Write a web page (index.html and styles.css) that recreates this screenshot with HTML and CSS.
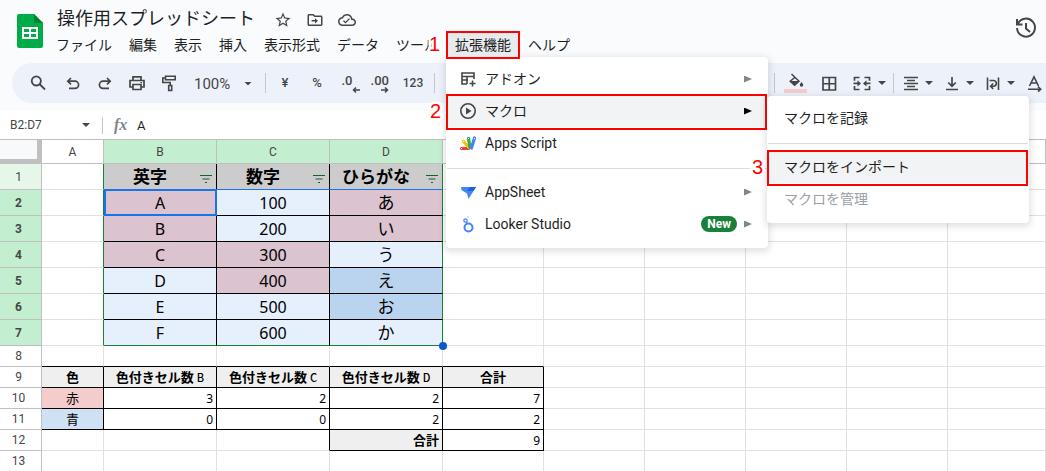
FILE: index.html
```html
<!DOCTYPE html>
<html lang="ja">
<head>
<meta charset="utf-8">
<title>操作用スプレッドシート</title>
<link rel="stylesheet" href="styles.css">
</head>
<body>
<header class="top">
  <svg class="logo" viewBox="0 0 26 34" aria-hidden="true"><path fill="#00ac47" d="M2 0h15l9 9v23a2 2 0 0 1-2 2H2a2 2 0 0 1-2-2V2a2 2 0 0 1 2-2z"/><path fill="#00832d" d="M17 0l9 9h-9z"/><path fill="#fff" fill-rule="evenodd" d="M5 13h16v12H5zM7 15v3h5v-3zM14 15v3h5v-3zM7 20v3h5v-3zM14 20v3h5v-3z"/></svg>
  <div class="heading">
    <div class="title-row">
      <h1 class="title">操作用スプレッドシート</h1>
      <button class="title-btn" aria-label="スター"><svg viewBox="0 0 24 24"><path d="M22 9.24l-7.19-.62L12 2 9.19 8.63 2 9.24l5.46 4.73L5.82 21 12 17.27 18.18 21l-1.63-7.03L22 9.24zM12 15.4l-3.76 2.27 1-4.28-3.32-2.88 4.38-.38L12 6.1l1.71 4.04 4.38.38-3.32 2.88 1 4.28L12 15.4z"/></svg></button>
      <button class="title-btn" aria-label="移動"><svg viewBox="0 0 24 24"><path d="M20 6h-8l-2-2H4c-1.1 0-2 .9-2 2v12c0 1.100.9 2 2 2h16c1.100 0 2-.9 2-2V8c0-1.100-.9-2-2-2zm0 12H4V6h5.170l2 2H20v10zm-8-6H7.500v2H12v2.500l4-3.500-4-3.500z"/></svg></button>
      <button class="title-btn" aria-label="保存状態"><svg viewBox="0 0 24 24"><path d="M19.350 10.040C18.670 6.590 15.640 4 12 4 9.110 4 6.600 5.640 5.350 8.040 2.340 8.360 0 10.910 0 14c0 3.310 2.690 6 6 6h13c2.760 0 5-2.240 5-5 0-2.640-2.050-4.780-4.650-4.960zM19 18H6c-2.210 0-4-1.790-4-4s1.790-4 4-4h.71C7.370 7.690 9.480 6 12 6c3.040 0 5.500 2.460 5.500 5.500v.5H19c1.660 0 3 1.340 3 3s-1.340 3-3 3zM10 14.200l-2-2-1.300 1.300L10 16.800l6-6-1.300-1.300z"/></svg></button>
    </div>
    <nav class="menubar">
      <button class="menu-btn">ファイル</button>
      <button class="menu-btn">編集</button>
      <button class="menu-btn">表示</button>
      <button class="menu-btn">挿入</button>
      <button class="menu-btn">表示形式</button>
      <button class="menu-btn">データ</button>
      <button class="menu-btn">ツール</button>
      <div class="menu-slot">
        <button class="menu-btn open">拡張機能</button>
        <span class="step step-1">1</span>
        <div class="menu main-menu">
          <button class="item"><svg class="item-icon" viewBox="0 0 18 18"><path fill="none" stroke="#444746" stroke-width="1.600" d="M8 14H3V3h12v6M3 6.500h12M3 10h6M8 6.500V14M13.500 10.500v6M10.500 13.500h6"/></svg><span class="item-text">アドオン</span><i class="arrow"></i></button>
          <div class="item-wrap marked">
            <button class="item active"><svg class="item-icon" viewBox="0 0 18 18"><circle cx="9" cy="9" r="7.200" fill="none" stroke="#444746" stroke-width="1.600"/><path fill="#444746" d="M7 5.500L12.500 9 7 12.500z"/></svg><span class="item-text">マクロ</span><i class="arrow"></i></button>
            <span class="step step-2">2</span>
            <div class="menu sub-menu">
              <button class="item"><span class="item-text">マクロを記録</span></button>
              <hr class="sep">
              <div class="item-wrap marked">
                <button class="item active"><span class="item-text">マクロをインポート</span></button>
                <span class="step step-3">3</span>
              </div>
              <button class="item off" disabled><span class="item-text">マクロを管理</span></button>
            </div>
          </div>
          <button class="item"><svg class="item-icon" viewBox="0 0 18 18"><g fill="none" stroke-linecap="round" stroke-width="3.200"><path stroke="#ea4335" d="M2.500 14.500h7"/><path stroke="#fbbc04" d="M4.500 7.500l5.500 6"/><path stroke="#34a853" d="M9.500 4.500l1.500 9"/><path stroke="#4285f4" d="M15.500 4l-3 10"/></g><path fill="#fff" d="M2 14h1v1H2zM4 7h1v1H4zM9 4h1v1H9zM15 4h1v1h-1z"/></svg><span class="item-text">Apps Script</span></button>
          <hr class="sep">
          <button class="item"><svg class="item-icon" viewBox="0 0 18 18"><path fill="#4285f4" d="M2 4h15L9.500 16 8 10.500 2.500 7z"/><path fill="#1a66d9" d="M11 4h6l-2.500 4H8z"/></svg><span class="item-text">AppSheet</span><i class="arrow"></i></button>
          <button class="item"><svg class="item-icon" viewBox="0 0 18 18"><g fill="none" stroke="#4285f4"><circle cx="9.500" cy="12.500" r="4" stroke-width="2"/><circle cx="6.500" cy="5.500" r="1.700" stroke-width="1.200"/></g><circle cx="9" cy="2" r="1.300" fill="#d2e3fc"/><path stroke="#4285f4" stroke-width="1.200" d="M7.500 7l1 2"/></svg><span class="item-text">Looker Studio</span><span class="badge">New</span><i class="arrow"></i></button>
        </div>
      </div>
      <button class="menu-btn">ヘルプ</button>
    </nav>
  </div>
  <button class="history" aria-label="変更履歴"><svg viewBox="0 0 24 24"><path fill="none" stroke="#444746" stroke-width="2" d="M4 7.500A9 9 0 1 1 3 12M3 3v5.500h5.500M12 7v5.500l4 3.500"/></svg></button>
</header>

<div class="toolbar">
  <button class="tool search" aria-label="検索"><svg viewBox="0 0 20 20"><path fill="none" stroke="#444746" stroke-width="1.800" d="M12 11.500l5 5M8.300 3.300a4.600 4.600 0 1 0 .01 0z"/></svg></button>
  <button class="tool" aria-label="元に戻す"><svg viewBox="0 0 20 20"><path fill="none" stroke="#444746" stroke-width="1.700" d="M8 5L4.800 8.200 8 11.400M5 8.200h7a3.600 3.600 0 0 1 0 7.200H6"/></svg></button>
  <button class="tool" aria-label="やり直し"><svg viewBox="0 0 20 20"><path fill="none" stroke="#444746" stroke-width="1.700" d="M12 5l3.200 3.200L12 11.400M15 8.200H8a3.600 3.600 0 0 0 0 7.200h6"/></svg></button>
  <button class="tool" aria-label="印刷"><svg viewBox="0 0 20 20"><path fill="none" stroke="#444746" stroke-width="1.700" d="M6 7V3.800h8V7M6 14H3V7.500h14V14h-3M6 11.500h8v5H6z"/><path fill="#444746" d="M13.500 9h1.500v1.300h-1.500z"/></svg></button>
  <button class="tool" aria-label="書式を貼り付け"><svg viewBox="0 0 20 20"><path fill="none" stroke="#444746" stroke-width="1.600" d="M6.500 3.300h9.700v3.400H6.500zM6.500 5H3.800v4.500h7.400V12M9.700 12.500h3v5h-3z"/></svg></button>
  <button class="tool zoom">100%<i class="caret"></i></button>
  <span class="divider"></span>
  <button class="tool glyph">¥</button>
  <button class="tool glyph">%</button>
  <button class="tool decimal less">.0<svg viewBox="0 0 8 6"><path fill="none" stroke="#444746" stroke-width="1.500" d="M8 3H1.500M4 .5L1.500 3 4 5.500"/></svg></button>
  <button class="tool decimal">.00<svg viewBox="0 0 8 6"><path fill="none" stroke="#444746" stroke-width="1.500" d="M0 3h6.500M4 .5L6.500 3 4 5.500"/></svg></button>
  <button class="tool number">123</button>
  <span class="divider"></span>
  <div class="tool-group">
    <span class="divider"></span>
    <button class="tool fill" aria-label="塗りつぶしの色"><svg viewBox="0 0 20 16"><path fill="none" stroke="#444746" stroke-width="1.500" d="M5.500 1l7.500 7.300-4.400 4L4.200 8.200 9.300 4"/><path fill="#444746" d="M4 8h9l-4.400 4.700zM15.500 9c1.200 1.600 1.700 2.300 1.700 3a1.700 1.700 0 0 1-3.400 0c0-.7.500-1.400 1.700-3z"/></svg><i class="swatch"></i></button>
    <button class="tool borders" aria-label="枠線"><svg viewBox="0 0 20 20"><path fill="none" stroke="#444746" stroke-width="1.700" d="M4 4.500h12.500V17H4zM10.250 4.500V17M4 10.750h12.500"/></svg></button>
    <button class="drop merge" aria-label="セルを結合"><svg viewBox="0 0 24 20"><path fill="none" stroke="#444746" stroke-width="1.700" d="M9.500 4.500h-5v3.300M4.500 13v3.500h5M14.500 4.500h5v3.300M19.500 13v3.500h-5M3.500 10.400h6M14.500 10.400h6"/><path fill="#444746" d="M7.500 7.200l3.500 3.200-3.500 3.200zM16.500 7.200L13 10.400l3.500 3.200z"/></svg><i class="caret"></i></button>
    <span class="divider"></span>
    <div class="drops">
      <button class="drop" aria-label="水平方向の配置"><svg viewBox="0 0 20 20"><path fill="none" stroke="#444746" stroke-width="1.600" d="M3 4.500h14M6 7.500h8M3 10.500h14M6 13.500h8M3 16.500h14"/></svg><i class="caret"></i></button>
      <button class="drop" aria-label="垂直方向の配置"><svg viewBox="0 0 20 20"><path fill="none" stroke="#444746" stroke-width="1.700" d="M10 4v9M6.200 9.500l3.800 3.700 3.800-3.700M4 16.500h12"/></svg><i class="caret"></i></button>
      <button class="drop" aria-label="折り返し"><svg viewBox="0 0 20 20"><path fill="none" stroke="#444746" stroke-width="1.600" d="M4.500 4.500V17M15.500 4.500V17M6.500 7.500h4a2.600 2.600 0 0 1 0 5.700H8.200M10.200 10.500l-2.600 2.700 2.600 2.700"/></svg><i class="caret"></i></button>
      <button class="drop" aria-label="テキストの回転"><svg viewBox="0 0 20 20"><path fill="none" stroke="#444746" stroke-width="1.600" d="M5.500 13L10 3.800 14.500 13M7 10h6M4 16.200h12.500M14 13.700l2.700 2.500-2.700 2.500"/></svg></button>
    </div>
  </div>
</div>

<div class="formula">
  <button class="name-box">B2:D7<i class="caret"></i></button>
  <span class="divider"></span>
  <span class="fx"><i>fx</i></span>
  <input class="formula-input" aria-label="数式バー" value="A">
</div>

<table class="grid">
  <colgroup><col class="c-row"><col class="c-a"><col class="c-b"><col class="c-b"><col class="c-b"><col class="c-e"><col class="c-e"><col class="c-e"><col class="c-e"><col class="c-e"><col></colgroup>
  <thead>
    <tr><th class="corner"></th><th>A</th><th class="sel">B</th><th class="sel">C</th><th class="sel">D</th><th>E</th><th>F</th><th>G</th><th>H</th><th>I</th><th>J</th></tr>
  </thead>
  <tbody class="tall">
    <tr><th class="near">1</th><td class="g-r"></td><td class="head blue-b">英字<svg class="filter" viewBox="0 0 12 8"><path d="M0 .5h12M2.500 4h7M5 7.500h2"/></svg></td><td class="head blue-b">数字<svg class="filter" viewBox="0 0 12 8"><path d="M0 .5h12M2.500 4h7M5 7.500h2"/></svg></td><td class="head blue-b g-r">ひらがな<svg class="filter" viewBox="0 0 12 8"><path d="M0 .5h12M2.500 4h7M5 7.500h2"/></svg></td><td></td><td></td><td></td><td></td><td></td><td></td></tr>
    <tr><th>2</th><td class="g-r"></td><td class="box red current">A</td><td class="box pale">100</td><td class="box red kana g-r">あ</td><td></td><td></td><td></td><td></td><td></td><td></td></tr>
    <tr><th>3</th><td class="g-r"></td><td class="box red">B</td><td class="box pale">200</td><td class="box red kana g-r">い</td><td></td><td></td><td></td><td></td><td></td><td></td></tr>
    <tr><th>4</th><td class="g-r"></td><td class="box red">C</td><td class="box red">300</td><td class="box pale kana g-r">う</td><td></td><td></td><td></td><td></td><td></td><td></td></tr>
    <tr><th>5</th><td class="g-r"></td><td class="box pale">D</td><td class="box red">400</td><td class="box blue kana g-r">え</td><td></td><td></td><td></td><td></td><td></td><td></td></tr>
    <tr><th>6</th><td class="g-r"></td><td class="box pale">E</td><td class="box pale">500</td><td class="box blue kana g-r">お</td><td></td><td></td><td></td><td></td><td></td><td></td></tr>
    <tr><th>7</th><td class="g-r"></td><td class="box pale g-b">F</td><td class="box pale g-b">600</td><td class="box pale kana g-b g-r handle">か</td><td></td><td></td><td></td><td></td><td></td><td></td></tr>
  </tbody>
  <tbody class="short">
    <tr><th>8</th><td class="k-b"></td><td class="k-b"></td><td class="k-b"></td><td class="k-b"></td><td class="k-b"></td><td></td><td></td><td></td><td></td><td></td></tr>
    <tr><th>9</th><td class="box label">色</td><td class="box label">色付きセル数 <small>B</small></td><td class="box label">色付きセル数 <small>C</small></td><td class="box label">色付きセル数 <small>D</small></td><td class="box label">合計</td><td></td><td></td><td></td><td></td><td></td></tr>
    <tr><th>10</th><td class="box name rose">赤</td><td class="box num">3</td><td class="box num">2</td><td class="box num">2</td><td class="box num">7</td><td></td><td></td><td></td><td></td><td></td></tr>
    <tr><th>11</th><td class="box name sky">青</td><td class="box num">0</td><td class="box num">0</td><td class="box num">2</td><td class="box num">2</td><td></td><td></td><td></td><td></td><td></td></tr>
    <tr><th>12</th><td></td><td></td><td class="k-r"></td><td class="box label total">合計</td><td class="box num">9</td><td></td><td></td><td></td><td></td><td></td></tr>
    <tr><th>13</th><td></td><td></td><td></td><td></td><td></td><td></td><td></td><td></td><td></td><td></td></tr>
  </tbody>
</table>
</body>
</html>
```
FILE: styles.css
```css
* { box-sizing: border-box; }
body {
  margin: 0;
  min-height: 100vh;
  overflow: hidden;
  background: #f9fbfd;
  color: #1f1f1f;
  font: 14px/20px Roboto, "Noto Sans CJK JP", sans-serif;
}
button {
  margin: 0;
  padding: 0;
  border: 0;
  background: none;
  color: inherit;
  font: inherit;
  white-space: nowrap;
}
svg { display: block; flex: none; }

/* Title and menu bar */
.top { display: flex; height: 63px; padding: 6px 8px 0 17px; }
.logo { width: 26px; height: 34px; margin-top: 8px; }
.heading { flex: 1; padding-left: 5px; }
.title-row { display: flex; align-items: center; height: 26px; padding-left: 9px; }
.title { margin: 0 12px 4px 0; font-size: 18px; line-height: 22px; font-weight: 400; font-family: "Noto Sans CJK JP", sans-serif; }
.title-btn { width: 32px; height: 24px; display: grid; place-items: center; margin-top: 2px; }
.title-btn svg { width: 18px; height: 18px; fill: #444746; }
.menubar { display: flex; gap: 1px; height: 26px; }
.menu-btn { height: 26px; padding: 0 8px; line-height: 26px; }
.menu-slot { position: relative; z-index: 5; }
.menu-btn.open { position: relative; z-index: 1; background: #e8ebee; outline: 2px solid #f00; outline-offset: -1px; }
.history { align-self: flex-start; width: 24px; height: 24px; margin-top: 10px; }
.history svg { width: 24px; height: 24px; }

/* Menus */
.menu {
  position: absolute;
  padding: 6px 0 8px;
  border-radius: 4px;
  background: #fff;
  box-shadow: 0 2px 6px 2px rgba(60, 64, 67, .15);
}
.main-menu { left: -1px; top: 25px; width: 322px; }
.sub-menu { left: 321px; top: 1px; width: 262px; z-index: 2; }
.item {
  display: flex;
  align-items: center;
  width: 100%;
  height: 32px;
  padding: 0 16px 0 13px;
  text-align: left;
  line-height: 20px;
}
.sub-menu .item { padding-left: 17px; }
.item-icon { width: 18px; height: 18px; margin-right: 8px; }
.item-text { flex: 1; }
.item.off { color: #9aa0a6; }
.item-wrap { position: relative; }
.marked .item.active { background: #f1f3f4; }
.marked > .item.active::after {
  content: "";
  position: absolute;
  inset: -1px 1px -3px 0;
  border: 2px solid #f00;
}
.arrow { width: 8px; height: 7px; background: #80868b; clip-path: polygon(0 0, 100% 50%, 0 100%); }
.item.active .arrow { background: #000; }
.badge { margin-right: 7px; padding: 0 6px; border-radius: 8px; background: #188038; color: #fff; font-size: 12px; line-height: 16px; font-weight: 700; }
.sep { height: 1px; margin: 9px 1px 7px; border: 0; background: #dadce0; }
.step {
  position: absolute;
  color: #f00;
  font: 20px/24px "Liberation Sans", sans-serif;
  -webkit-text-stroke: 5px #fff;
  paint-order: stroke fill;
}
.step-1 { left: -18px; top: 0; }
.step-2 { left: -16px; top: 4px; }
.step-3 { left: -15px; top: 4px; }

/* Toolbar */
.toolbar {
  display: flex;
  align-items: center;
  gap: 2px;
  height: 40px;
  margin: 0 0 8px 12px;
  padding-left: 11px;
  border-radius: 20px 0 0 20px;
  background: #edf2fa;
  color: #444746;
  overflow: hidden;
}
.tool { flex: none; width: 30px; height: 30px; display: grid; place-items: center; }
.tool svg { width: 20px; height: 20px; }
.search { margin-right: 3px; }
.zoom { display: flex; justify-content: space-between; align-items: center; width: 73px; padding: 1px 7px 0 8px; font-size: 15px; }
.caret { width: 8px; height: 4px; background: #444746; clip-path: polygon(0 0, 100% 0, 50% 100%); }
.divider { flex: none; width: 1px; height: 20px; margin: 0 2px 0 4px; background: #c7c7c7; }
.glyph { font-size: 13px; font-weight: 500; }
.number { font-size: 12px; font-weight: 500; }
.tool.decimal { align-content: end; justify-items: end; padding: 0 7px 5px 0; font-size: 13px; font-weight: 500; line-height: 12px; }
.tool.decimal svg { width: 8px; height: 6px; }
.tool.less { justify-items: center; padding-right: 6px; }
.tool.less svg { margin-left: 18px; }
.tool-group { display: flex; align-items: center; gap: 2px; margin-left: 331px; }
.tool.fill { width: 33px; align-content: center; }
.tool.fill svg { width: 20px; height: 16px; }
.swatch { width: 23px; height: 4px; background: #f4cccc; }
.drop { display: flex; align-items: center; gap: 4px; height: 30px; }
.drop svg { width: 20px; height: 20px; }
.drop.merge { margin: 0 1px 0 4px; }
.drop.merge svg { width: 24px; }
.drops { display: flex; gap: 9px; margin-left: 3px; }

/* Formula bar */
.formula { display: flex; align-items: center; height: 28px; background: #fff; }
.name-box { display: flex; align-items: center; justify-content: space-between; width: 98px; padding: 0 8px 0 10px; font-size: 12px; color: #444746; }
.formula .divider { height: 17px; }
.fx { width: 32px; padding-left: 9px; color: #80868b; font: 700 16px/20px "Liberation Serif", serif; }
.formula-input { flex: 1; height: 24px; padding: 0; border: 0; outline: 0; background: none; color: #1f1f1f; font: 13px Roboto, sans-serif; }

/* Sheet */
.grid { width: 100%; table-layout: fixed; border-collapse: separate; border-spacing: 0; border-top: 1px solid #c0c0c0; background: #fff; }
.c-row { width: 42px; }
.c-a { width: 62px; }
.c-b { width: 113px; }
.c-e { width: 101px; }
.grid th, .grid td { padding: 0; border: 0 solid #e1e1e1; border-width: 0 1px 1px 0; text-align: center; white-space: nowrap; }
.grid th { border-color: #c0c0c0; color: #444746; font: 12px/16px Roboto, sans-serif; }
.grid thead th { height: 24px; }
.grid thead .corner { background: #f8f9fa; border-right: 5px solid #c0c0c0; border-bottom: 5px solid #c0c0c0; }
.grid thead .sel { background: #c4eed0; }
.tall th, .tall td { height: 26px; }
.grid .tall th { background: #c4eed0; font-weight: 700; }
.grid .tall .near { background: #e6f7ea; font-weight: 400; }
.short th, .short td { height: 21px; }
.grid th:first-child { padding-right: 4px; }
.grid .head, .grid .box { border-color: #000; color: #000; }
.box { font: 16px/20px "Noto Sans", "Noto Sans CJK JP", sans-serif; }
.kana { font-family: "Noto Sans CJK JP", sans-serif; font-size: 17px; }
.grid .head { position: relative; padding: 0 20px 2px 0; background: #ccc; font: 700 17px/20px "Noto Sans CJK JP", sans-serif; }
.grid .kana { padding-bottom: 2px; }
.filter { position: absolute; right: 4px; bottom: 6px; width: 12px; height: 8px; fill: none; stroke: #0d652d; }
.red { background: #dcc3d0; }
.pale { background: #e6f0fd; }
.blue { background: #bad4f0; }
.grid .g-r { border-right-color: #188038; }
.grid .g-b { border-bottom-color: #188038; }
.grid .blue-b { border-bottom-color: #1a73e8; }
.grid .k-b { border-bottom-color: #000; }
.grid .k-r { border-right-color: #000; }
.current, .handle { position: relative; }
.current::after { content: ""; position: absolute; inset: -1px -1px -1px 0; border: 2px solid #1a73e8; }
.handle::after { content: ""; position: absolute; right: -5px; bottom: -5px; width: 8px; height: 8px; border-radius: 50%; background: #0b57d0; }
.label { background: #efefef; font: 700 13px/16px "Noto Sans CJK JP", sans-serif; }
.label small { font-size: 11px; font-weight: 500; }
.name { font: 13px/16px "Noto Sans CJK JP", sans-serif; }
.rose { background: #f4cccc; }
.sky { background: #cfe2f3; }
.grid .num { padding: 2px 3px 0 0; text-align: right; font: 12px/16px "Noto Sans", sans-serif; }
.grid .total { padding-right: 3px; text-align: right; }
```
